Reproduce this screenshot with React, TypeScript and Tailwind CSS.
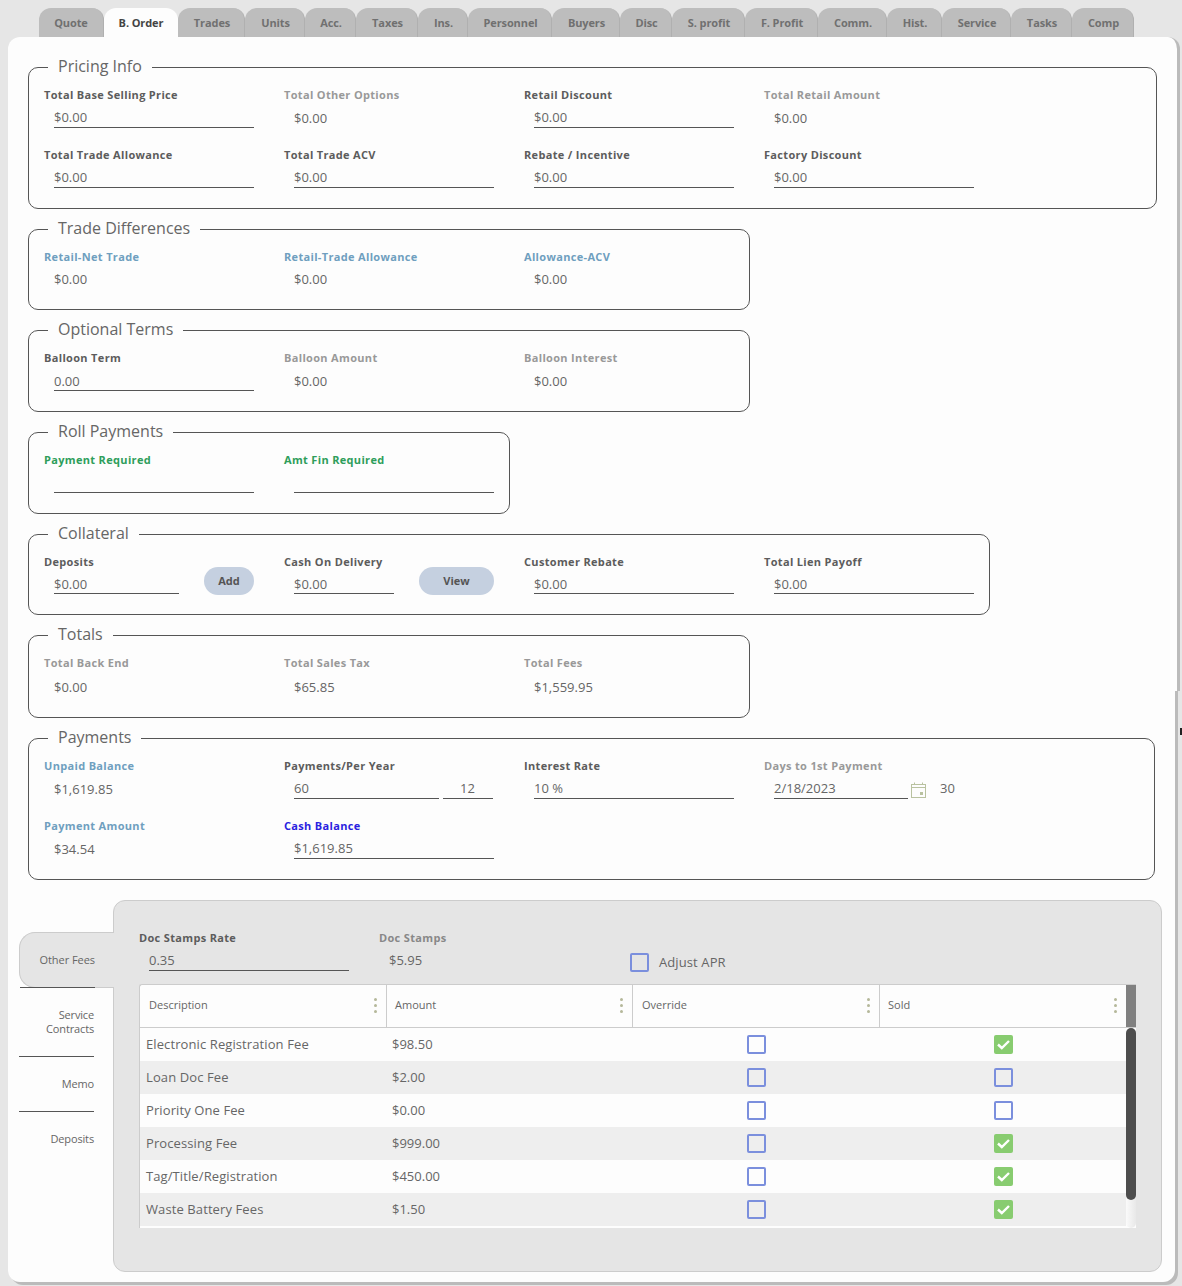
import React from 'react';

const tabs = [
  { label: 'Quote', w: 'w-[65px] pr-[2px]' },
  { label: 'B. Order', w: 'w-[74px]', active: true },
  { label: 'Trades', w: 'w-[67px]' },
  { label: 'Units', w: 'w-[60px]' },
  { label: 'Acc.', w: 'w-[51px]' },
  { label: 'Taxes', w: 'w-[62px]' },
  { label: 'Ins.', w: 'w-[50px]' },
  { label: 'Personnel', w: 'w-[84px]' },
  { label: 'Buyers', w: 'w-[68px]' },
  { label: 'Disc', w: 'w-[52px]' },
  { label: 'S. profit', w: 'w-[73px]' },
  { label: 'F. Profit', w: 'w-[73px]' },
  { label: 'Comm.', w: 'w-[69px]' },
  { label: 'Hist.', w: 'w-[55px]' },
  { label: 'Service', w: 'w-[69px]' },
  { label: 'Tasks', w: 'w-[61px]' },
  { label: 'Comp', w: 'w-[62px]' },
];

const fees = [
  { name: 'Electronic Registration Fee', amount: '$98.50', sold: true },
  { name: 'Loan Doc Fee', amount: '$2.00', sold: false },
  { name: 'Priority One Fee', amount: '$0.00', sold: false },
  { name: 'Processing Fee', amount: '$999.00', sold: true },
  { name: 'Tag/Title/Registration', amount: '$450.00', sold: true },
  { name: 'Waste Battery Fees', amount: '$1.50', sold: true },
];

const Group = ({ title, size, children }: { title: string; size: string; children: React.ReactNode }) => (
  <fieldset className={`${size} min-w-0 shrink-0 rounded-[10px] border border-[#555] pl-[15px] pt-[9px]`}>
    <legend className="ml-[4px] translate-y-[-1px] px-[10px] text-[16px] leading-[22px] font-normal text-[#666]">{title}</legend>
    <div className="grid grid-cols-[repeat(4,240px)]">{children}</div>
  </fieldset>
);

const Label = ({ text, color = 'text-[#5c5c5c]' }: { text: string; color?: string }) => (
  <div className={`h-[16px] text-[11px] leading-[16px] font-bold tracking-[0.33px] whitespace-nowrap ${color}`}>{text}</div>
);

// underlined input look-alike
const Input = ({ value = '', width = 'w-[200px]', box = 'h-[25px] pt-[4px]' }: { value?: string; width?: string; box?: string }) => (
  <div className={`${width} ${box} ml-[10px] border-b border-[#555] text-[13px] leading-[20px] text-[#666]`}>{value}</div>
);

const Field = ({ label, value, box }: { label: string; value?: string; box?: string }) => (
  <div className="h-[60px] w-[240px]">
    <Label text={label} />
    <Input value={value} box={box} />
  </div>
);

const ReadOnly = ({ label, value, color = 'text-[#999]', drop = 'pt-[5px]' }: { label: string; value: string; color?: string; drop?: string }) => (
  <div className="h-[60px] w-[240px]">
    <Label text={label} color={color} />
    <div className={`${drop} pl-[10px] text-[13px] leading-[20px] text-[#666]`}>{value}</div>
  </div>
);

const ActionField = ({ label, input, action, button }: { label: string; input: string; action: string; button: string }) => (
  <div className="h-[60px] w-[240px]">
    <Label text={label} />
    <div className="flex items-start">
      <Input value="$0.00" width={input} box="h-[24px] pt-[4px]" />
      <button className={`${button} mt-[-3px] ml-[25px] h-[28px] rounded-[14px] bg-[#c5d0e0] text-[11px] font-bold text-[#555]`}>{action}</button>
    </div>
  </div>
);

const CheckBox = ({ checked }: { checked?: boolean }) =>
  checked ? (
    <div className="flex h-[19px] w-[19px] items-center justify-center rounded-[2px] bg-[#88cc70]">
      <svg width="13" height="11" viewBox="0 0 13 11" fill="none">
        <path d="M1 5.5 L4.8 9 L12 2" stroke="#fff" strokeWidth="2.4" />
      </svg>
    </div>
  ) : (
    <div className="h-[19px] w-[19px] rounded-[2px] border-2 border-[#7b8fdd]" />
  );

const Dots = () => (
  <div className="flex flex-col gap-[3px]">
    <span className="h-[3px] w-[3px] rounded-full bg-[#b5b89a]" />
    <span className="h-[3px] w-[3px] rounded-full bg-[#b5b89a]" />
    <span className="h-[3px] w-[3px] rounded-full bg-[#b5b89a]" />
  </div>
);

const Calendar = () => (
  <svg width="15" height="16" viewBox="0 0 15 16" fill="none" stroke="#b9c2a0">
    <rect x="0.5" y="2.5" width="14" height="13" />
    <path d="M0.5 5.5 H14.5 M3.5 0.5 V2.5 M11.5 0.5 V2.5" />
    <rect x="9" y="10" width="3" height="3" fill="#b9c2a0" stroke="none" />
  </svg>
);

const HeaderCell = ({ text, size }: { text: string; size: string }) => (
  <div className={`flex h-full items-center justify-between pr-[9px] pb-[2px] text-[11px] text-[#666] ${size}`}>
    <span>{text}</span>
    <Dots />
  </div>
);

const FeesTable = () => (
  <div className="w-[997px] rounded-tl-[3px] border-t border-l border-[#ccc] bg-[#fdfdfd]">
    <div className="flex h-[43px] border-b border-[#ccc]">
      <HeaderCell text="Description" size="w-[247px] border-r border-[#ccc] pl-[9px]" />
      <HeaderCell text="Amount" size="w-[246px] border-r border-[#ccc] pl-[8px]" />
      <HeaderCell text="Override" size="w-[247px] border-r border-[#ccc] pl-[9px]" />
      <HeaderCell text="Sold" size="w-[246px] pl-[8px]" />
      <div className="ml-auto h-full w-[10px] bg-[#808080]" />
    </div>
    <div className="flex h-[200px]">
      <div className="w-[986px]">
        {fees.map((fee, i) => (
          <div key={fee.name} className={`flex h-[33px] items-center text-[13px] text-[#666] ${i % 2 ? 'bg-[#eeeeee]' : 'bg-[#fdfdfd]'}`}>
            <div className="w-[247px] pl-[6px] tracking-[0.1px]">{fee.name}</div>
            <div className="w-[246px] pl-[5px]">{fee.amount}</div>
            <div className="flex w-[247px] justify-center"><CheckBox /></div>
            <div className="flex w-[246px] justify-center"><CheckBox checked={fee.sold} /></div>
          </div>
        ))}
      </div>
      <div className="h-full w-[10px] rounded-full bg-gradient-to-r from-[#fafafa] to-[#e8e8e8]">
        <div className="h-[172px] rounded-full bg-[#4d4d4d]" />
      </div>
    </div>
  </div>
);

const SideTab = ({ text, size, active }: { text: React.ReactNode; size: string; active?: boolean }) =>
  active ? (
    <div className={`${size} relative z-10 mr-[-1px] flex items-center justify-end rounded-l-[16px] border-y border-l border-[#ccc] bg-[#e5e5e5] pr-[19px] text-[11px] tracking-[-0.05px] text-[#666]`}>
      <div className="absolute bottom-[-1px] left-0 h-px w-[75px] bg-[#555]" />
      {text}
    </div>
  ) : (
    <div className={`${size} flex w-[75px] items-center justify-end text-right text-[11px] leading-[14px] tracking-[-0.15px] text-[#666]`}>{text}</div>
  );

export default function App() {
  return (
    <div className="relative h-[1286px] overflow-hidden bg-[#e6e6e6] font-['Open_Sans',sans-serif]">
      <div className="flex pt-2 pl-[39px]">
        {tabs.map(tab => (
          <div
            key={tab.label}
            className={`flex h-[29px] items-center justify-center rounded-t-[12px] pt-[1px] text-[11px] font-bold tracking-[-0.1px] ${tab.w} ${tab.active ? 'bg-[#fdfdfd] text-[#444]' : 'border-r border-[#b0b0b0] bg-[#bdbdbd] pl-[2px] text-[#707070]'}`}
          >
            {tab.label}
          </div>
        ))}
      </div>

      <div className="ml-2 h-[1245px] w-[1167px] rounded-[12px] bg-[#fdfdfd] pt-[19px] shadow-[3px_3px_0_#bbbbbb]">
        <div className="flex flex-col gap-[9px] pl-[20px]">
          <Group title="Pricing Info" size="h-[153px] w-[1129px]">
            <Field label="Total Base Selling Price" value="$0.00" />
            <ReadOnly label="Total Other Options" value="$0.00" />
            <Field label="Retail Discount" value="$0.00" />
            <ReadOnly label="Total Retail Amount" value="$0.00" />
            <Field label="Total Trade Allowance" value="$0.00" />
            <Field label="Total Trade ACV" value="$0.00" />
            <Field label="Rebate / Incentive" value="$0.00" />
            <Field label="Factory Discount" value="$0.00" />
          </Group>

          <Group title="Trade Differences" size="h-[92px] w-[722px]">
            <ReadOnly label="Retail-Net Trade" value="$0.00" color="text-[#6f9fbf]" drop="pt-[4px]" />
            <ReadOnly label="Retail-Trade Allowance" value="$0.00" color="text-[#6f9fbf]" drop="pt-[4px]" />
            <ReadOnly label="Allowance-ACV" value="$0.00" color="text-[#6f9fbf]" drop="pt-[4px]" />
          </Group>

          <Group title="Optional Terms" size="h-[93px] w-[722px]">
            <Field label="Balloon Term" value="0.00" box="h-[25px] pt-[5px]" />
            <ReadOnly label="Balloon Amount" value="$0.00" />
            <ReadOnly label="Balloon Interest" value="$0.00" />
          </Group>

          <Group title="Roll Payments" size="h-[93px] w-[482px]">
            <div className="h-[60px] w-[240px]">
              <Label text="Payment Required" color="text-[#2e9e5b]" />
              <Input />
            </div>
            <div className="h-[60px] w-[240px]">
              <Label text="Amt Fin Required" color="text-[#2e9e5b]" />
              <Input />
            </div>
          </Group>

          <Group title="Collateral" size="h-[92px] w-[962px]">
            <ActionField label="Deposits" input="w-[125px]" action="Add" button="w-[50px]" />
            <ActionField label="Cash On Delivery" input="w-[100px]" action="View" button="w-[75px]" />
            <Field label="Customer Rebate" value="$0.00" box="h-[24px] pt-[4px]" />
            <Field label="Total Lien Payoff" value="$0.00" box="h-[24px] pt-[4px]" />
          </Group>

          <Group title="Totals" size="h-[94px] w-[722px]">
            <ReadOnly label="Total Back End" value="$0.00" drop="pt-[6px]" />
            <ReadOnly label="Total Sales Tax" value="$65.85" drop="pt-[6px]" />
            <ReadOnly label="Total Fees" value="$1,559.95" drop="pt-[6px]" />
          </Group>

          <Group title="Payments" size="h-[153px] w-[1127px]">
            <ReadOnly label="Unpaid Balance" value="$1,619.85" color="text-[#6f9fbf]" />
            <div className="h-[60px] w-[240px]">
              <Label text="Payments/Per Year" />
              <div className="flex">
                <Input value="60" width="w-[145px]" />
                <div className="ml-[4px] h-[25px] w-[50px] border-b border-[#555] pt-[4px] pl-[17px] text-[13px] leading-[20px] text-[#666]">12</div>
              </div>
            </div>
            <Field label="Interest Rate" value="10 %" />
            <div className="h-[60px] w-[240px]">
              <Label text="Days to 1st Payment" color="text-[#999]" />
              <div className="flex items-end">
                <Input value="2/18/2023" width="w-[134px]" />
                <div className="mb-[1px] ml-[3px] flex items-end"><Calendar /></div>
                <span className="mb-[1px] ml-[14px] text-[13px] leading-[20px] text-[#666]">30</span>
              </div>
            </div>
            <ReadOnly label="Payment Amount" value="$34.54" color="text-[#6f9fbf]" drop="pt-[5px]" />
            <div className="h-[60px] w-[240px]">
              <Label text="Cash Balance" color="text-[#2a1fe0]" />
              <Input value="$1,619.85" />
            </div>
          </Group>
        </div>

        <div className="mt-[20px] ml-[11px] flex">
          <div className="mt-[32px] flex w-[94px] shrink-0 flex-col">
            <SideTab text="Other Fees" size="h-[56px]" active />
            <SideTab text={<span>Service<br />Contracts</span>} size="h-[69px] border-b border-[#555]" />
            <SideTab text="Memo" size="h-[55px] border-b border-[#555]" />
            <SideTab text="Deposits" size="h-[53px]" />
          </div>

          <div className="h-[372px] w-[1049px] rounded-[12px] border border-[#ccc] bg-[#e5e5e5] pt-[29px] pl-[25px]">
            <div className="flex h-[54px]">
              <Field label="Doc Stamps Rate" value="0.35" />
              <ReadOnly label="Doc Stamps" value="$5.95" color="text-[#888]" drop="pt-[4px]" />
              <div className="ml-[11px] flex h-[42px] items-end gap-[10px] text-[13px] tracking-[0.1px] text-[#666]">
                <CheckBox />
                <span className="leading-[19px]">Adjust APR</span>
              </div>
            </div>
            <FeesTable />
          </div>
        </div>
      </div>

      {/* the upper part of the capture sits 2px wider than the lower part */}
      <div className="absolute top-[37px] left-[1160px] h-[654px] w-[20px] rounded-tr-[12px] border-r-[3px] border-[#bbbbbb] bg-[#fdfdfd]" />
      <div className="absolute top-[728px] left-[1180px] h-[7px] w-[2px] bg-[#222]" />
    </div>
  );
}
